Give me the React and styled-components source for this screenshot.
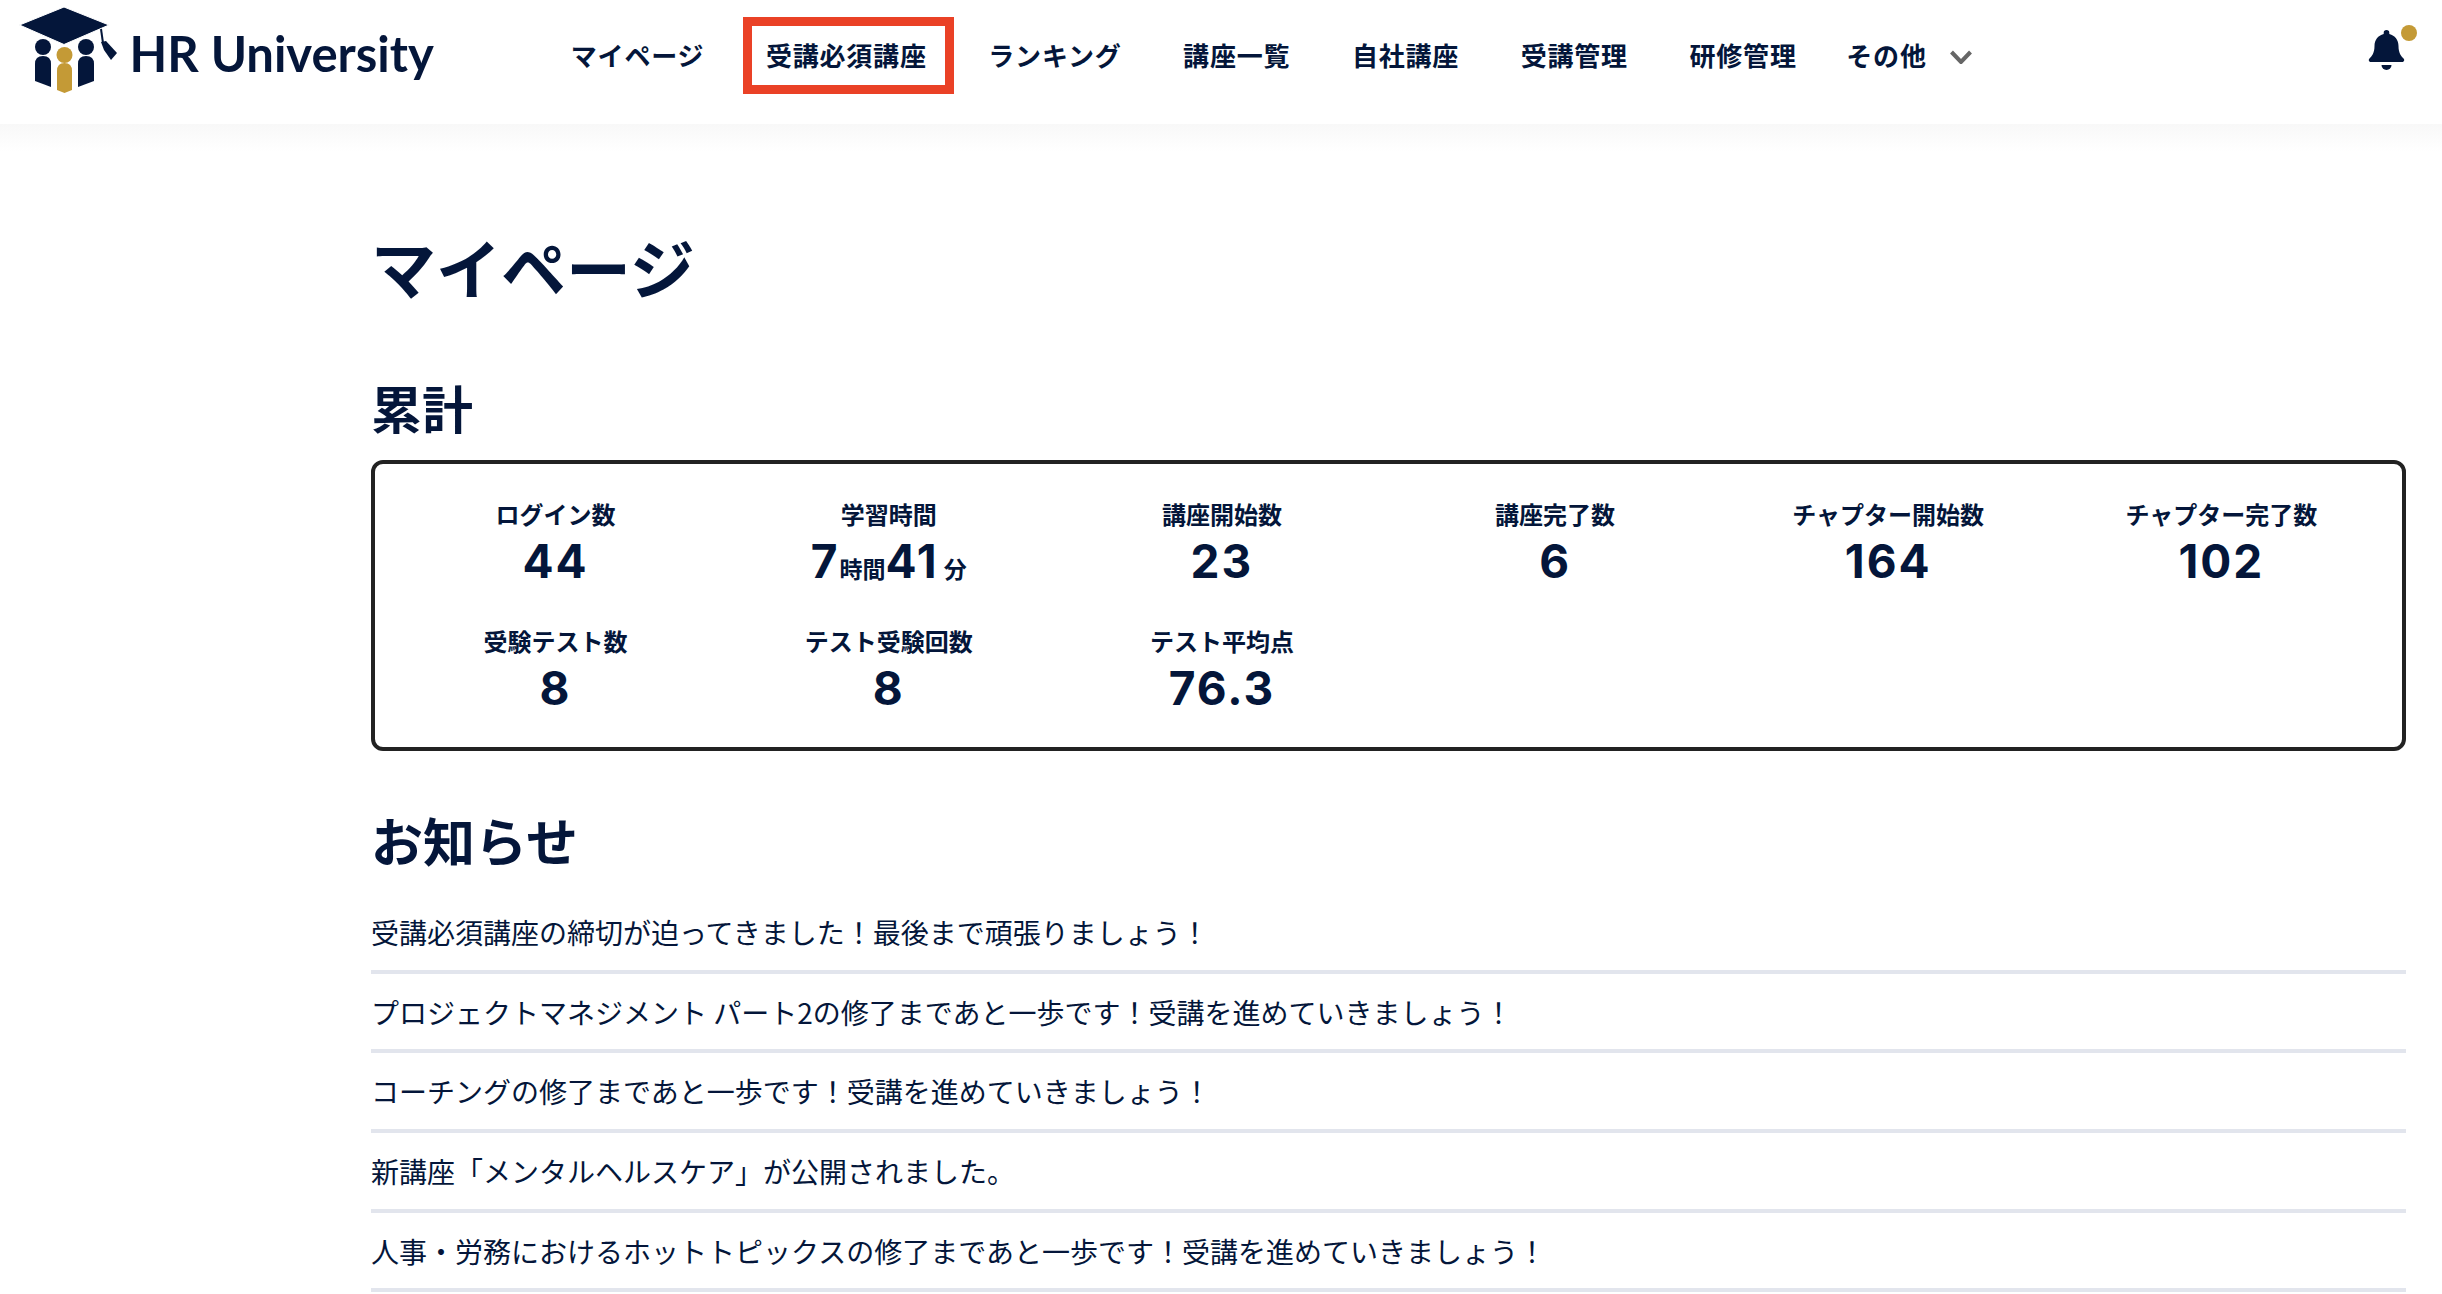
import React from 'react';
import styled, { createGlobalStyle } from 'styled-components';

const navy = '#04163a';
const jp = `"Noto Sans CJK JP", "Noto Sans", sans-serif`;

const Global = createGlobalStyle`
  html, body { margin: 0; padding: 0; background: #fff; overflow: hidden; }
  body { font-family: ${jp}; color: ${navy}; }
  * { box-sizing: border-box; }
`;

const Header = styled.header`
  height: 124px;
  display: flex;
  align-items: center;
  background: #fff;
`;
const Shade = styled.div`
  height: 28px;
  background: linear-gradient(#f8f8f8, #ffffff);
`;
const LogoBox = styled.div`
  display: flex;
  align-items: center;
  padding-left: 18px;
  width: 540px;
  flex: none;
  margin-top: -24px;
`;
const LogoText = styled.span`
  font-family: Lato, sans-serif;
  font-weight: 700;
  font-size: 49px;
  line-height: 1;
  margin-left: 11.5px;
  margin-top: 6px;
  white-space: nowrap;
`;
const Nav = styled.nav`
  display: flex;
  align-items: center;
  flex: 1;
`;
const NavItem = styled.a`
  position: relative;
  padding: 0 30.8px;
  font-size: 26px;
  font-weight: 700;
  letter-spacing: 0.8px;
  white-space: nowrap;
  color: ${navy};
  margin-top: -15px;
  margin-left: ${p => (p.$tight ? -12 : 0)}px;
`;
const Marker = styled.span`
  position: absolute;
  left: 8px;
  top: -19px;
  width: 211px;
  height: 77px;
  border: 9px solid #ea4126;
`;
const Chevron = styled.svg`
  width: 24px;
  height: 14px;
  margin-left: -9px;
  margin-top: -10px;
`;
const BellBox = styled.div`
  flex: none;
  width: 52px;
  height: 52px;
  margin-right: 24px;
  margin-top: -24px;
`;
const Main = styled.main`
  padding: 0 36px 0 371px;
`;
const H1 = styled.h1`
  margin: 69px 0 0;
  font-size: 65px;
  line-height: 90px;
  font-weight: 700;
`;
const H2 = styled.h2`
  margin: ${p => p.$top}px 0 0;
  font-size: ${p => p.$size}px;
  line-height: 70px;
  font-weight: 700;
`;
const StatCard = styled.section`
  margin-top: 18px;
  height: 291px;
  border: 4px solid #222;
  border-radius: 12px;
  padding: 33px 14px 0;
  display: grid;
  grid-template-columns: repeat(6, 1fr);
  grid-auto-rows: 127px;
`;
const Stat = styled.div`
  text-align: center;
`;
const StatLabel = styled.div`
  font-size: 24px;
  line-height: 34px;
  font-weight: 700;
`;
const StatValue = styled.div`
  font-family: Inter, ${jp};
  font-size: 46px;
  line-height: 56px;
  font-weight: 700;
  letter-spacing: 2px;
  margin-top: 2px;
`;
const Unit = styled.span`
  font-family: ${jp};
  font-size: 23px;
  font-weight: 700;
  letter-spacing: 0;
  margin-left: ${p => p.$gap || 0}px;
`;
const List = styled.ul`
  list-style: none;
  margin: 19px 0 0;
  padding: 0;
`;
const Row = styled.li`
  height: 79.7px;
  display: flex;
  align-items: center;
  font-size: 28px;
  border-bottom: 4px solid #e2e5ed;
  white-space: pre;
`;

const navItems = ['受講必須講座', 'ランキング', '講座一覧', '自社講座', '受講管理', '研修管理'];
const stats = [
  ['ログイン数', '44'],
  ['学習時間', <>7<Unit>時間</Unit>41<Unit $gap={5}>分</Unit></>],
  ['講座開始数', '23'],
  ['講座完了数', '6'],
  ['チャプター開始数', '164'],
  ['チャプター完了数', '102'],
  ['受験テスト数', '8'],
  ['テスト受験回数', '8'],
  ['テスト平均点', '76.3'],
];
const news = [
  '受講必須講座の締切が迫ってきました！最後まで頑張りましょう！',
  'プロジェクトマネジメント パート2の修了まであと一歩です！受講を進めていきましょう！',
  'コーチングの修了まであと一歩です！受講を進めていきましょう！',
  '新講座「メンタルヘルスケア」が公開されました。',
  '人事・労務におけるホットトピックスの修了まであと一歩です！受講を進めていきましょう！',
];

const LogoIcon = () => (
  <svg width="100" height="88" viewBox="18 6 100 88" style={{ flex: 'none' }}>
    <circle cx="43" cy="47" r="8" fill={navy} />
    <circle cx="86" cy="47" r="8" fill={navy} />
    <path fill={navy} stroke="#fff" strokeWidth="1" d="M19.5 25 L64 7 L109 25 L64 44.5 Z" />
    <path fill="none" stroke={navy} strokeWidth="2" d="M101 29 L103 43" />
    <path fill={navy} d="M101 42 L106 41 L117 53 L111 60 L104 50 Z" />
    <path fill={navy} d="M35 64 Q35 56 43 56 Q51 56 51 64 V87 L35 81 Z" />
    <path fill={navy} d="M78 87 V64 Q78 56 86 56 Q94 56 94 64 V81 Z" />
    <circle cx="64.5" cy="55" r="8" fill="#c49a36" />
    <path fill="#c49a36" d="M57 71 Q57 63 64.5 63 Q72 63 72 71 V90 L64.5 93 L57 90 Z" />
  </svg>
);

const Bell = () => (
  <svg width="52" height="52" viewBox="0 0 52 52">
    <path fill={navy} d="M20.5 6 A2.8 2.8 0 0 1 23.3 8.8 V10 C29 11.5 32.5 16 32.5 22 C32.5 29 35 32 37.5 34.5 C39 36 38 38 36 38 H5 C3 38 2 36 3.5 34.5 C6 32 8.5 29 8.5 22 C8.5 16 12 11.5 17.7 10 V8.8 A2.8 2.8 0 0 1 20.5 6 Z" />
    <path fill={navy} d="M15.5 41 H25.5 A5 5 0 0 1 15.5 41 Z" />
    <circle cx="43" cy="9" r="8" fill="#c49a36" />
  </svg>
);

export default function App() {
  return (
    <>
      <Global />
      <Header>
        <LogoBox>
          <LogoIcon />
          <LogoText>HR University</LogoText>
        </LogoBox>
        <Nav>
          <NavItem>マイページ</NavItem>
          {navItems.map((n, i) => (
            <NavItem key={n}>
              {n}
              {i === 0 && <Marker />}
            </NavItem>
          ))}
          <NavItem $tight>その他</NavItem>
          <Chevron viewBox="0 0 24 14">
            <path d="M2.5 2 L12 12 L21.5 2" fill="none" stroke="#666" strokeWidth="4" />
          </Chevron>
        </Nav>
        <BellBox><Bell /></BellBox>
      </Header>
      <Shade />
      <Main>
        <H1>マイページ</H1>
        <H2 $top={61} $size={51}>累計</H2>
        <StatCard>
          {stats.map(([l, v]) => (
            <Stat key={l}>
              <StatLabel>{l}</StatLabel>
              <StatValue>{v}</StatValue>
            </Stat>
          ))}
        </StatCard>
        <H2 $top={54} $size={52}>お知らせ</H2>
        <List>
          {news.map(n => <Row key={n}>{n}</Row>)}
        </List>
      </Main>
    </>
  );
}
